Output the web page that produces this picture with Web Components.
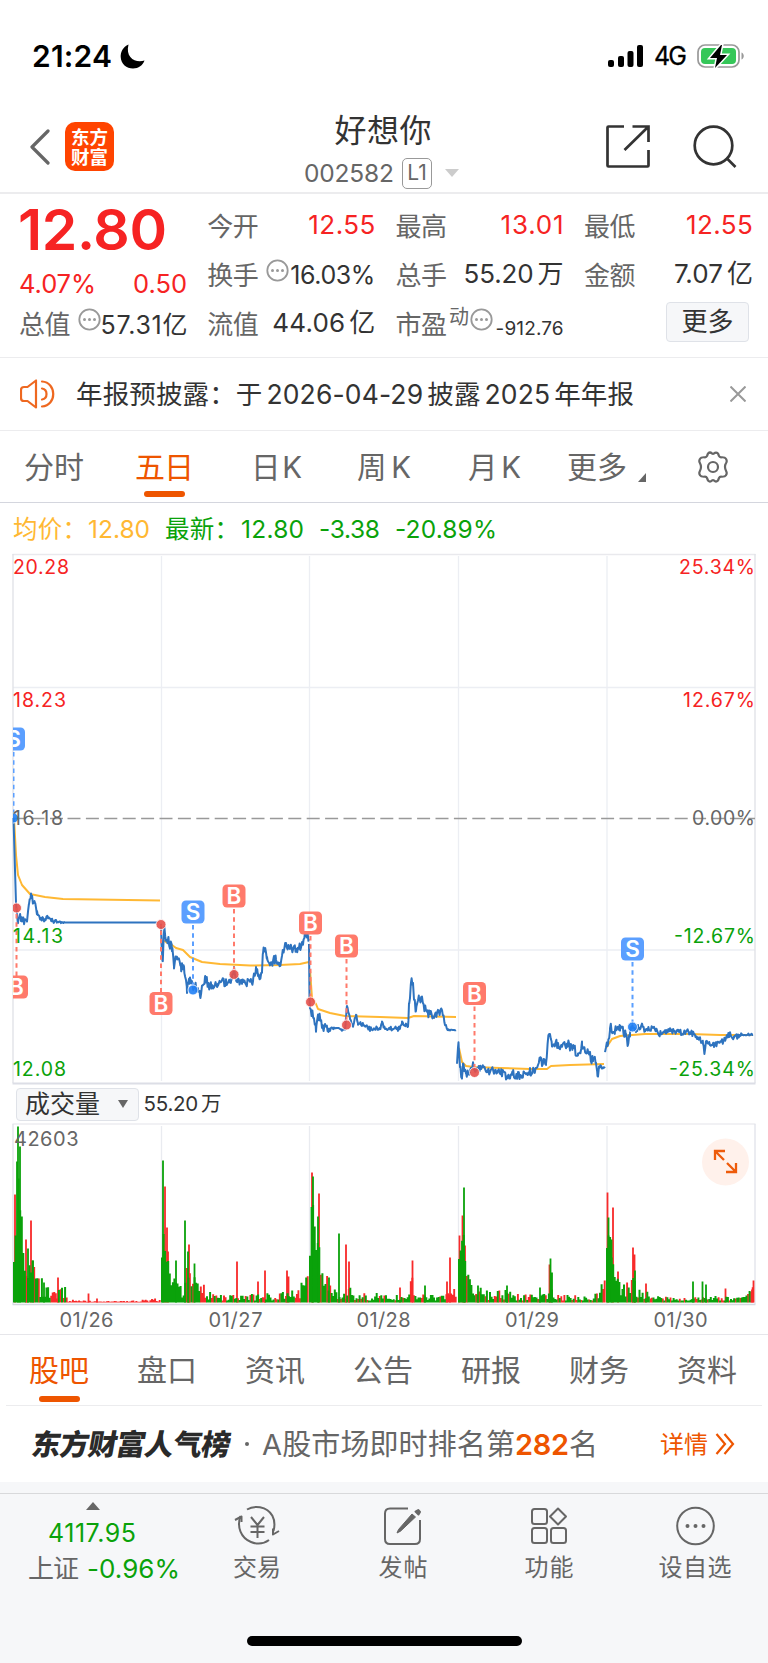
<!DOCTYPE html>
<html lang="zh-CN">
<head>
<meta charset="utf-8">
<title>好想你 002582</title>
<style>
  body {
    margin: 0;
    background: #fff;
    color: #333;
    font-family: Inter, "Noto Sans CJK SC", sans-serif;
    --grey: #666;
    --red: #f62323;
    --green: #0aa20a;
    --orange: #ee5500;
    --line: #ececee;
  }
</style>
</head>
<body>
<stock-page></stock-page>

<script>
  // Text that is tracked to fill an exact width
  class FitText extends HTMLElement {
    constructor() {
      super();
      this.attachShadow({ mode: 'open' });
      this.shadowRoot.innerHTML = `
        <style>
          :host { display: inline-block; white-space: nowrap; flex: none; }
        </style>
        <span><slot></slot></span>
      `;
    }

    connectedCallback() {
      const width = Number(this.getAttribute('w'));
      const size = this.getAttribute('s');
      if (size) this.style.fontSize = size + 'px';
      const span = this.shadowRoot.querySelector('span');
      const natural = span.getBoundingClientRect().width;
      const count = this.textContent.length;
      if (width && natural && count > 1) {
        this.style.letterSpacing = (width - natural) / (count - 1) + 'px';
      }
      this.style.width = width + 'px';
    }
  }
  customElements.define('fit-text', FitText);

  class StatusBar extends HTMLElement {
    constructor() {
      super();
      this.attachShadow({ mode: 'open' });
      this.shadowRoot.innerHTML = `
        <style>
          :host {
            display: flex; align-items: center; box-sizing: border-box;
            height: 96px; padding: 16px 22px 0 32px; color: #000;
          }
          .time { font-weight: 600; margin-right: 8px; }
          .gap { flex: 1; }
          .net { font-weight: 400; margin: 0 10px 0 10px; -webkit-text-stroke: .3px #000; }
        </style>
        <fit-text class="time" w="80" s="30">21:24</fit-text>
        <svg width="25" height="25" viewBox="0 0 25 25"><path d="M8.5 0.5C3 3 .5 8 .7 13 1 20 6.600 24.500 13 24.500c5.500 0 9.800-3.100 11.500-8C16 19.500 5 14 8.500.5z" fill="#000"/></svg>
        <span class="gap"></span>
        <svg width="36" height="23" viewBox="0 0 36 23">
          <rect x="0" y="15" width="6" height="7" rx="2"/><rect x="10" y="11" width="6" height="11" rx="2"/>
          <rect x="19.500" y="6" width="6" height="16" rx="2"/><rect x="29" y="0" width="6" height="22" rx="2"/>
        </svg>
        <fit-text class="net" w="33" s="25">4G</fit-text>
        <svg width="49" height="26" viewBox="0 0 49 26">
          <rect x="1" y="2" width="41" height="22" rx="7" fill="none" stroke="#999" stroke-width="1.700"/>
          <rect x="4" y="5" width="35" height="16" rx="4" fill="#35c759"/>
          <path d="M44.500 9.500c3 1.200 3 5.800 0 7z" fill="#999"/>
          <path d="M24 2L13 15h7l-2 10L30 12h-7l2-10z" fill="#000" stroke="#fff" stroke-width="3" paint-order="stroke"/>
        </svg>
      `;
    }
  }
  customElements.define('status-bar', StatusBar);

  class StockHeader extends HTMLElement {
    constructor() {
      super();
      this.attachShadow({ mode: 'open' });
      this.shadowRoot.innerHTML = `
        <style>
          :host {
            display: grid; grid-template-columns: 250px 1fr 250px; box-sizing: border-box;
            height: 98px; border-bottom: 2px solid var(--line);
          }
          .left { display: flex; align-items: center; padding: 5px 0 0 29px; gap: 14px; }
          .logo {
            display: flex; flex-direction: column; justify-content: center; align-items: center;
            width: 49px; height: 49px; border-radius: 10px; background: #ff4400;
            color: #fff; font-weight: 600; font-size: 18.500px; line-height: 20px;
          }
          .mid { display: flex; flex-direction: column; align-items: center; }
          .name { line-height: 42px; margin: 14px 2px 0 0; }
          .code { display: flex; align-items: center; height: 34px; margin-top: 4px; color: var(--grey); padding-right: 5px; }
          .level {
            box-sizing: border-box; width: 30px; height: 31px; line-height: 28px; margin: 0 13px 0 8px;
            border: 1.500px solid #999; border-radius: 5px; text-align: center; font-size: 21px;
          }
          .right { display: flex; align-items: center; justify-content: flex-end; gap: 43px; padding: 5px 31px 0 0; }
        </style>
        <div class="left">
          <svg width="22" height="36" viewBox="0 0 22 36"><path d="M19 2L3 18l16 16" fill="none" stroke="#666" stroke-width="3.200" stroke-linecap="round" stroke-linejoin="round"/></svg>
          <div class="logo"><span>东方</span><span>财富</span></div>
        </div>
        <div class="mid">
          <fit-text class="name" w="97" s="32">好想你</fit-text>
          <div class="code">
            <fit-text w="90" s="24.5">002582</fit-text><span class="level">L1</span>
            <svg width="14" height="8"><path d="M0 0h14L7 8z" fill="#ccc"/></svg>
          </div>
        </div>
        <div class="right">
          <svg width="44" height="43" viewBox="0 0 44 43" fill="none" stroke="#333" stroke-width="2.700">
            <path d="M18 1.500H2.500q-1 0-1 1V40.500q0 1 1 1H41.500q1 0 1-1V25"/>
            <path d="M26.500 1.500h16V17M42 2L18.500 25"/>
          </svg>
          <svg width="44" height="43" viewBox="0 0 44 43" fill="none" stroke="#333" stroke-width="2.700">
            <circle cx="20.500" cy="20.500" r="18.800"/><path d="M33.500 33l9 9"/>
          </svg>
        </div>
      `;
    }
  }
  customElements.define('stock-header', StockHeader);

  // Label on the left, value (slotted) on the right
  class QuoteCell extends HTMLElement {
    constructor() {
      super();
      this.attachShadow({ mode: 'open' });
      const sup = this.getAttribute('sup') || '';
      const info = this.hasAttribute('info')
        ? `<svg width="23" height="23" viewBox="0 0 23 23"><circle cx="11.500" cy="11.500" r="10.200" fill="none" stroke="#999" stroke-width="1.800"/><g fill="#999"><circle cx="6.500" cy="11.500" r="1.500"/><circle cx="11.500" cy="11.500" r="1.500"/><circle cx="16.500" cy="11.500" r="1.500"/></g></svg>`
        : '';
      this.shadowRoot.innerHTML = `
        <style>
          :host { display: flex; align-items: center; height: 49px; line-height: 49px; color: #333; }
          .label { color: var(--grey); }
          sup { font-size: 20px; line-height: 20px; color: var(--grey); margin: -15px 0 0 2px; }
          svg { margin: -11px 0 0 ${sup ? '1px' : '7px'}; flex: none; }
          .value { margin-left: auto; }
          :host([up]) .value { color: var(--red); }
        </style>
        <fit-text class="label" w="51.5" s="26">${this.getAttribute('label')}</fit-text>
        ${sup ? `<sup>${sup}</sup>` : ''}${info}
        <span class="value"><slot></slot></span>
      `;
    }
  }
  customElements.define('quote-cell', QuoteCell);

  class QuotePanel extends HTMLElement {
    constructor() {
      super();
      this.attachShadow({ mode: 'open' });
      this.shadowRoot.innerHTML = `
        <style>
          :host {
            display: grid; grid-template-columns: 168px 168px 168px 169px; column-gap: 20.300px;
            box-sizing: border-box; height: 164px; padding: 8px 0 0 19px;
            border-bottom: 1.500px solid var(--line);
          }
          .price { height: 56px; line-height: 56px; color: var(--red); font-weight: 600; }
          .price fit-text { margin-left: -1px; }
          .change { display: flex; justify-content: space-between; height: 52px; line-height: 51px; color: var(--red); }
          .total { height: 30px; line-height: 30px; }
          fit-text.low { position: relative; top: 1px; }
          fit-text.small { position: relative; top: 4.500px; }
          .u { margin-left: 4px; }
          button {
            display: block; margin: 2px 4px 0 auto; width: 83px; height: 40px; padding: 0;
            border: 1.500px solid #dfe2e8; border-radius: 4px; background: #f6f7f9;
            font: 26px/36px Inter, "Noto Sans CJK SC", sans-serif; color: #333;
          }
        </style>
        <div>
          <div class="price"><fit-text w="149" s="57">12.80</fit-text></div>
          <div class="change"><fit-text w="77" s="25.5">4.07%</fit-text><fit-text w="54" s="25.5">0.50</fit-text></div>
          <quote-cell class="total" label="总值" info><fit-text class="low" w="87" s="25">57.31亿</fit-text></quote-cell>
        </div>
        <div>
          <quote-cell label="今开" up><fit-text w="67" s="26">12.55</fit-text></quote-cell>
          <quote-cell label="换手" info><fit-text class="low" w="85" s="25">16.03%</fit-text></quote-cell>
          <quote-cell label="流值"><fit-text w="103" s="26">44.06<span class="u">亿</span></fit-text></quote-cell>
        </div>
        <div>
          <quote-cell label="最高" up><fit-text w="63" s="26">13.01</fit-text></quote-cell>
          <quote-cell label="总手"><fit-text w="100" s="26">55.20<span class="u">万</span></fit-text></quote-cell>
          <quote-cell label="市盈" sup="动" info><fit-text class="small" w="68" s="19">-912.76</fit-text></quote-cell>
        </div>
        <div>
          <quote-cell label="最低" up><fit-text w="67" s="26">12.55</fit-text></quote-cell>
          <quote-cell label="金额"><fit-text w="79" s="26">7.07<span class="u">亿</span></fit-text></quote-cell>
          <button>更多</button>
        </div>
      `;
    }
  }
  customElements.define('quote-panel', QuotePanel);

  class NoticeBar extends HTMLElement {
    constructor() {
      super();
      this.attachShadow({ mode: 'open' });
      this.shadowRoot.innerHTML = `
        <style>
          :host {
            display: flex; align-items: center; box-sizing: border-box; height: 73px;
            padding: 0 22px 0 20px; border-bottom: 1.500px solid var(--line);
          }
          fit-text { margin-left: 21px; line-height: 40px; }
          .n { margin: 0 4px; }
          .close { margin-left: auto; }
        </style>
        <svg width="35" height="30" viewBox="0 0 35 30" fill="none" stroke="#ee6820" stroke-width="2.200" stroke-linejoin="round" stroke-linecap="round">
          <path d="M16 1.500v27L7.500 22H4q-3 0-3-3v-8q0-3 3-3h3.500z"/>
          <path d="M22 2.500c15 1 15 24 0 25M22 9.500c6 1 6 10 0 11"/>
        </svg>
        <fit-text w="558" s="26.5">年报预披露：于<span class="n">2026-04-29</span>披露<span class="n">2025</span>年年报</fit-text>
        <svg class="close" width="16" height="16" viewBox="0 0 16 16"><path d="M.5.5l15 15M15.500.5l-15 15" stroke="#999" stroke-width="2"/></svg>
      `;
    }
  }
  customElements.define('notice-bar', NoticeBar);

  class PeriodTabs extends HTMLElement {
    constructor() {
      super();
      this.attachShadow({ mode: 'open' });
      this.shadowRoot.innerHTML = `
        <style>
          :host {
            display: flex; align-items: center; box-sizing: border-box; height: 72px;
            padding: 0 0 0 24px; border-bottom: 1.500px solid #d4d6de; color: var(--grey);
          }
          .tab { display: flex; flex-direction: column; align-items: center; height: 71px; line-height: 72px; }
          .tab.on { color: var(--orange); }
          .tab.on::after { content: ""; width: 41px; height: 6px; margin-top: -12px; border-radius: 3px; background: var(--orange); flex: none; }
          .tri { margin: 21px 0 0 11px; }
          .gear { margin-left: 50px; }
        </style>
        <div class="tab" style="margin-right:51px"><fit-text w="60" s="30">分时</fit-text></div>
        <div class="tab on" style="margin-right:57px"><fit-text w="59" s="30">五日</fit-text></div>
        <div class="tab" style="margin-right:55px"><fit-text w="51" s="29.5">日K</fit-text></div>
        <div class="tab" style="margin-right:57px"><fit-text w="54" s="29.5">周K</fit-text></div>
        <div class="tab" style="margin-right:46px"><fit-text w="53" s="29.5">月K</fit-text></div>
        <div class="tab"><fit-text w="60" s="30">更多</fit-text></div>
        <svg class="tri" width="8" height="9"><path d="M8 0v9H0z" fill="#666"/></svg>
        <svg class="gear" width="34" height="32" viewBox="0 0 34 32" fill="none" stroke="#666" stroke-width="2.200" stroke-linejoin="round">
          <path d="M12 2.500q2-2 4 0 1 .6 2 0 2-2 4 0l1 2.500q.6 1.200 2 1.300 4-.3 5 1.500 1.300 2 .2 4-1.300 2.200-1.200 4.200 0 2 1.200 4.200 1.100 2-.2 4-1 1.800-5 1.500-1.400.1-2 1.300l-1 2.500q-2 2-4 0-1-.6-2 0-2 2-4 0l-1-2.500q-.6-1.200-2-1.300-4 .3-5-1.500-1.300-2-.2-4Q5 18 5 16t-1.200-4.200q-1.100-2 .2-4 1-1.800 5-1.500 1.400-.1 2-1.300z"/>
          <circle cx="17" cy="16" r="5"/>
        </svg>
      `;
    }
  }
  customElements.define('period-tabs', PeriodTabs);

  // Small deterministic jitter, -1..1
  function jitter(n) {
    const v = Math.sin(n * 127.1 + 11.7) * 43758.5453;
    return (v - Math.floor(v)) * 2 - 1;
  }

  // Height of a polyline at x
  function valueAt(points, x) {
    for (let i = 1; i < points.length; i++) {
      const [x0, y0] = points[i - 1];
      const [x1, y1] = points[i];
      if (x <= x1) return y0 + (y1 - y0) * Math.max(0, x - x0) / (x1 - x0 || 1);
    }
    return points[points.length - 1][1];
  }

  const PRICES = [
    { noise: [[14, 0], [18, 3], [30, 5], [45, 3], [63, 0.6], [66, 0], [157, 0]], pts: [[13.5, 818], [15, 870], [16, 903], [18, 923], [20, 915], [22, 921], [27, 922], [29, 903], [31, 894], [33, 903], [35, 904], [37, 911], [41, 918], [45, 921], [48, 917], [53, 921], [62, 922.5], [157, 922.5]] },
    { noise: [[161, 6], [210, 5], [240, 3.5], [270, 5], [309, 4]], pts: [[161, 924], [161.5, 945], [162.500, 962], [164, 932], [168, 940], [172, 950], [174, 966], [177, 957], [181, 966], [184, 966], [187, 992], [189, 978], [193, 989], [198, 987], [200, 995], [205, 977], [210, 987], [218, 983], [228, 982], [232, 980], [234, 968], [236, 980], [244, 983], [253, 981], [256, 968], [259, 978], [262, 973], [263, 953], [265, 948], [267, 958], [271, 963], [276, 959], [280, 963], [284, 951], [286, 943], [290, 949], [297, 949], [303, 944], [305, 931], [307.5, 935], [309, 938]] },
    { noise: [[310, 6], [325, 4], [335, 1.5], [400, 2.5], [412, 5], [440, 4], [450, 0.4]], pts: [[309, 945], [309.5, 1000], [311, 1012], [314, 1018], [316, 1032], [318, 1014], [321, 1020], [323, 1029], [325, 1024], [328, 1030], [334, 1029], [345, 1030], [347, 1006], [350, 1018], [353, 1027], [356, 1015], [358, 1023], [364, 1025], [370, 1029], [380, 1028], [382, 1023], [385, 1029], [400, 1029], [402, 1024], [408, 1026], [409, 1004], [411, 983], [413, 982], [414, 1000], [416, 1010], [419, 999], [422, 1000], [425, 1009], [430, 1015], [436, 1014], [442, 1010], [445, 1025], [448, 1030], [456, 1030]] },
    { noise: [[458, 4], [475, 3], [540, 5], [595, 5], [605, 0.7]], pts: [[457, 1064], [458.5, 1042], [460, 1068], [462, 1079], [463, 1063], [466, 1074], [470, 1073], [473, 1062], [475, 1072], [482, 1066], [488, 1072], [495, 1070], [501, 1072], [507, 1078], [513, 1074], [520, 1076], [526, 1073], [534, 1070], [540, 1061], [546, 1063], [549, 1034], [552, 1046], [556, 1042], [560, 1050], [564, 1043], [570, 1046], [578, 1053], [582, 1046], [588, 1052], [593, 1061], [596, 1062], [597.5, 1077], [599, 1066], [605, 1068]] },
    { noise: [[606, 5], [640, 5], [650, 3], [710, 3], [735, 3], [742, 1.2]], pts: [[605, 1051], [608, 1044], [610, 1028], [615, 1030], [620, 1030], [626, 1033], [628, 1044], [630, 1032], [632, 1026], [636, 1031], [638, 1028], [653, 1028], [660, 1034], [670, 1031], [680, 1032], [690, 1032], [700, 1038], [703, 1044], [704.5, 1054], [706, 1042], [716, 1045], [724, 1040], [729, 1034], [734, 1038], [742, 1034], [753, 1035]] }
  ];

  const AVERAGES = [
    'M14 818L16 855 18 875 22 885 30 894 45 897 63 899 160 900.500',
    'M163 940L166 942 172 945 176 948 183 950 190 957 202 962 220 964 250 965.500 280 965 300 964 309 962',
    'M310 970L312 998 316 1004 318 1009 330 1013 345 1016 380 1017 408 1018 414 1016 456 1017',
    'M459 1048L462 1062 466 1066 474 1067 500 1068 530 1069 547 1069 551 1066 570 1065 604 1064',
    'M606 1048L612 1039 620 1036 645 1034 690 1034 720 1035 753 1035'
  ];

  // kind, badge centre, dot centre
  const TRADES = [
    ['S', 13.5, 739, 818], ['B', 16.5, 987, 908], ['B', 161, 1003.5, 924.500],
    ['S', 193, 912, 990], ['B', 234, 896, 974.500], ['B', 310.5, 923, 1002],
    ['B', 346.5, 946, 1025], ['B', 474.5, 993.500, 1072.500], ['S', 632.5, 949, 1027]
  ];

  class PriceChart extends HTMLElement {
    constructor() {
      super();
      this.attachShadow({ mode: 'open' });
      const lines = PRICES.map((day, d) => {
        const first = day.pts[0][0];
        const last = day.pts[day.pts.length - 1][0];
        const all = day.pts.map(p => [...p, 0.25]);
        for (let x = first + 1; x < last; x += 0.8) all.push([x, valueAt(day.pts, x), 1]);
        all.sort((a, b) => a[0] - b[0]);
        return 'M' + all.map(([x, y, k]) =>
          x.toFixed(1) + ' ' + Math.min(1081, y + jitter(x + d) * valueAt(day.noise, x) * k).toFixed(1)).join('L');
      });
      const trades = TRADES.map(([kind, x, y, dot]) => {
        const buy = kind === 'B';
        const tint = buy ? '#ff7a6b' : '#5b9fff';
        return `
          <line x1="${x}" x2="${x}" y1="${y > dot ? y - 11 : y + 13}" y2="${dot}" stroke="${tint}" stroke-width="2" stroke-dasharray="4.500 3.700"/>
          <circle cx="${x}" cy="${dot}" r="5" fill="${buy ? '#e6504a' : '#2080f5'}" fill-opacity=".9" stroke="#fff" stroke-width=".8"/>
          <rect x="${x - 11.5}" y="${y - 11.5}" width="23" height="23" rx="4.500" fill="${tint}"/>
          <text x="${x}" y="${y + 8}" class="mark">${kind}</text>`;
      }).join('');
      this.shadowRoot.innerHTML = `
        <style>
          :host { display: block; height: 532px; }
          svg { display: block; }
          text { font: 19.500px Inter, sans-serif; }
          .mark { font-size: 22.500px; font-weight: 600; fill: #fff; text-anchor: middle; }
          .r { fill: #f62323; } .g { fill: #0aa20a; } .k { fill: #666; }
          .e { text-anchor: end; }
        </style>
        <svg width="768" height="532" viewBox="0 553 768 532">
          <defs><clipPath id="plot"><rect x="13" y="554" width="743" height="530"/></clipPath></defs>
          <path d="M161.500 556v525M309.500 556v525M458.500 556v525M607 556v525M13 687.500h742M13 950h742" stroke="#eceef3" stroke-width="1.300"/>
          <path d="M12.500 554.500h743" stroke="#e9e9ed" stroke-width="1.500"/>
          <path d="M13 554v529M755 554v529" stroke="#dfe0e6" stroke-width="1.300"/><path d="M12.500 1083.500h743" stroke="#dcdee6" stroke-width="1.800"/>
          <path d="M13 818.500h50" stroke="#999" stroke-width="1.500" stroke-dasharray="13 5.500"/>
          <path d="M67.500 818.500H755" stroke="#999" stroke-width="1.500" stroke-dasharray="13 5.400"/>
          <g fill="none" stroke="#ffb833" stroke-width="2" stroke-linejoin="round">${AVERAGES.map(d => `<path d="${d}"/>`).join('')}</g>
          <g fill="none" stroke="#2e73bf" stroke-width="2" stroke-linejoin="round">${lines.map(d => `<path d="${d}"/>`).join('')}</g>
          <g clip-path="url(#plot)">${trades}</g>
          <text x="13" y="574" textLength="56" class="r">20.28</text>
          <text x="13" y="706.500" textLength="53" class="r">18.23</text>
          <text x="13" y="825" textLength="50" class="k">16.18</text>
          <text x="13" y="943" textLength="50" class="g">14.13</text>
          <text x="13" y="1075.500" textLength="53" class="g">12.08</text>
          <text x="755" y="574" textLength="76" class="r e">25.34%</text>
          <text x="755" y="706.500" textLength="72" class="r e">12.67%</text>
          <text x="755" y="825" textLength="63" class="k e">0.00%</text>
          <text x="755" y="943" textLength="81" class="g e">-12.67%</text>
          <text x="755" y="1075.500" textLength="86" class="g e">-25.34%</text>
        </svg>
      `;
    }
  }
  customElements.define('price-chart', PriceChart);

  const VOLUME_BASE = [
    [[14, 36], [16, 90], [17, 125], [18, 160], [20, 117], [22, 98], [24, 45], [27, 28], [30, 36], [33, 42], [36, 24], [40, 17], [50, 11], [65, 13], [67, 2.5], [80, 1.500], [130, 1], [160, 3]],
    [[162, 41], [163, 100], [165, 55], [168, 38], [171, 22], [175, 19], [180, 13], [184, 10], [187, 38], [190, 18], [197, 16], [204, 12], [210, 7], [225, 5], [280, 6], [300, 10], [308, 28]],
    [[310, 45], [311, 98], [313, 126], [315, 66], [317, 60], [319, 70], [321, 33], [324, 20], [330, 16], [338, 10], [344, 6], [348, 16], [352, 7], [380, 6], [408, 6], [412, 28], [416, 7], [440, 5], [457, 10]],
    [[459, 40], [461, 50], [464, 72], [466, 28], [472, 20], [480, 10], [490, 7], [505, 8], [520, 5], [548, 6], [551, 20], [554, 8], [562, 5], [590, 4], [600, 12], [606, 24]],
    [[607, 50], [609, 80], [611, 48], [613, 45], [616, 22], [622, 14], [630, 16], [633, 30], [636, 10], [645, 8], [655, 5], [680, 3], [700, 5], [725, 4], [748, 6], [754, 12]]
  ];
  const SPIKES = {
    r: [[15, 108], [26, 63], [31, 82], [58, 25], [88.5, 9], [97, 4], [165, 116], [167, 75], [168, 51], [189, 58], [237, 41], [258, 21], [265, 32], [287, 32], [288.5, 26], [312, 130], [319, 109], [346, 58], [349, 41], [400, 15], [412.5, 42], [447, 21], [450, 45], [459.5, 67], [462.5, 87], [465, 57], [549.5, 38], [607.5, 110], [613, 95], [618, 31], [633, 55], [634.5, 48], [646, 19], [725.5, 14], [752, 13], [753.5, 22]],
    g: [[18, 176], [20, 156], [28, 54], [33, 42], [44, 20], [163, 142], [176, 42], [185, 82], [188, 51], [194.5, 39], [313, 126], [318, 86], [329, 25], [339, 69], [425, 17], [464, 115], [478, 17], [507, 17], [540, 15], [550.5, 44], [552, 30], [608.5, 85], [611.5, 63], [635, 32], [693, 21], [702.5, 21], [706, 18]]
  };

  class VolumeChart extends HTMLElement {
    constructor() {
      super();
      this.attachShadow({ mode: 'open' });
      const path = { r: '', g: '' };
      const floor = 1302.5;
      VOLUME_BASE.forEach((day, d) => {
        const last = day[day.length - 1][0];
        for (let x = day[0][0]; x <= last; x += 1.55) {
          const h = valueAt(day, x);
          const quiet = d === 0 && x > 67;
          const red = quiet || (h < 40 && jitter(x * 3 + d) > 0.3);
          const bar = Math.max(quiet ? 0.8 : 2, h * (0.95 + jitter(x + d * 5) * (h < 20 ? 0.65 : 0.18)));
          path[red ? 'r' : 'g'] += `M${x.toFixed(1)} ${floor}v-${bar.toFixed(1)}`;
        }
      });
      const spikes = k => SPIKES[k].map(([x, h]) => `M${x} ${floor}v-${h}`).join('');
      const dates = ['01/26', '01/27', '01/28', '01/29', '01/30'];
      const centers = [86.5, 235.5, 383.5, 532, 680.5];
      this.shadowRoot.innerHTML = `
        <style>
          :host { display: block; height: 211px; border-bottom: 1.500px solid #e6e6ea; }
          svg { display: block; }
          text { font: 20px Inter, sans-serif; fill: #666; }
          .date { text-anchor: middle; }
        </style>
        <svg width="768" height="211" viewBox="0 1123 768 211">
          <path d="M161.500 1126v178M309.500 1126v178M458.500 1126v178M607 1126v178" stroke="#e9ebf0" stroke-width="1.300"/>
          <path d="M12.500 1124h743" stroke="#ececf0" stroke-width="1.500"/>
          <path d="M13 1124v180M755 1124v180" stroke="#e0e2ea" stroke-width="1.300"/><path d="M12.500 1304.500h743" stroke="#d4d8e0" stroke-width="1.300"/>
          <path d="${spikes('r')}" stroke="#f82a2a" stroke-width="1.800"/>
          <path d="${path.r}" stroke="#f82a2a" stroke-width="1.900"/>
          <path d="${path.g}" stroke="#0aa20a" stroke-width="2"/>
          <path d="${spikes('g')}" stroke="#0aa20a" stroke-width="1.800"/>
          <text x="14" y="1146" textLength="64.500">42603</text>
          <circle cx="725.500" cy="1162" r="23.500" fill="#fff1eb"/>
          <path d="M715 1160v-9h10M716 1152l8 8M736 1163v9h-10M735 1171l-8-8" fill="none" stroke="#ee5b0a" stroke-width="2.300"/>
          ${dates.map((t, i) => `<text class="date" x="${centers[i]}" y="1327" textLength="54">${t}</text>`).join('')}
        </svg>
      `;
    }
  }
  customElements.define('volume-chart', VolumeChart);

  class ChartPanel extends HTMLElement {
    constructor() {
      super();
      this.attachShadow({ mode: 'open' });
      this.shadowRoot.innerHTML = `
        <style>
          :host { display: block; }
          .legend { display: flex; height: 50px; padding-left: 13px; line-height: 52px; color: var(--green); }
          .avg { color: #ffb833; }
          .bar { display: flex; align-items: center; height: 38px; padding-left: 16px; font-size: 25px; line-height: 30px; }
          .pick {
            display: flex; align-items: center; justify-content: space-between; box-sizing: border-box;
            width: 122.500px; height: 33px; padding: 0 10px 0 8px; margin-right: 5px;
            border: 1.500px solid #dfe2e8; border-radius: 4px; background: #f6f7f9;
          }
          .u { margin-left: 3px; }
        </style>
        <div class="legend">
          <fit-text class="avg" style="margin-right:1px" w="74" s="24.5">均价：</fit-text>
          <fit-text class="avg" style="margin-right:15px" w="62" s="24.5">12.80</fit-text>
          <fit-text style="margin-right:2px" w="74" s="24.5">最新：</fit-text>
          <fit-text style="margin-right:15px" w="63" s="24.5">12.80</fit-text>
          <fit-text style="margin-right:15px" w="61" s="24.5">-3.38</fit-text>
          <fit-text w="102" s="24.5">-20.89%</fit-text>
        </div>
        <price-chart></price-chart>
        <div class="bar">
          <div class="pick"><fit-text w="75" s="25">成交量</fit-text><svg width="10" height="8"><path d="M0 0h10L5 8z" fill="#666"/></svg></div>
          <fit-text w="78" s="20.5">55.20<span class="u">万</span></fit-text>
        </div>
        <volume-chart></volume-chart>
      `;
    }
  }
  customElements.define('chart-panel', ChartPanel);

  class SectionTabs extends HTMLElement {
    constructor() {
      super();
      this.attachShadow({ mode: 'open' });
      const tabs = ['股吧', '盘口', '资讯', '公告', '研报', '财务', '资料'];
      this.shadowRoot.innerHTML = `
        <style>
          :host {
            display: flex; justify-content: space-between; box-sizing: border-box; height: 71px;
            margin: 0 6px; padding: 0 25px 0 23px; border-bottom: 1.500px solid var(--line); color: var(--grey);
          }
          .tab { display: flex; flex-direction: column; align-items: center; line-height: 71px; height: 70px; }
          .on { color: var(--orange); }
          .on::after { content: ""; width: 41px; height: 6px; margin: -10px 0 0 1px; border-radius: 3px; background: var(--orange); }
        </style>
        ${tabs.map((t, i) => `<div class="tab${i ? '' : ' on'}"><fit-text w="60" s="30">${t}</fit-text></div>`).join('')}
      `;
    }
  }
  customElements.define('section-tabs', SectionTabs);

  class RankRow extends HTMLElement {
    constructor() {
      super();
      this.attachShadow({ mode: 'open' });
      this.shadowRoot.innerHTML = `
        <style>
          :host {
            display: flex; align-items: center; box-sizing: border-box; height: 76px; padding: 0 33px 0 32px;
            color: var(--grey); line-height: 77px;
          }
          .title { font-weight: 900; color: #2a2a2a; transform: skewX(-10deg); margin-right: 8px; }
          .dot { width: 4px; height: 4px; border-radius: 50%; background: #666; margin-right: 13px; }
          .num { color: var(--orange); font-weight: 600; }
          .more { color: var(--orange); margin-left: auto; margin-right: 7px; }
        </style>
        <fit-text class="title" w="205" s="29">东方财富人气榜</fit-text>
        <span class="dot"></span>
        <fit-text w="253" s="29">A股市场即时排名第</fit-text>
        <fit-text class="num" w="54" s="29">282</fit-text>
        <fit-text w="29" s="29">名</fit-text>
        <fit-text class="more" w="48" s="24">详情</fit-text>
        <svg width="20" height="22" viewBox="0 0 20 22" fill="none" stroke="#ee5500" stroke-width="2.200"><path d="M1.500 1l8.500 10-8.500 10M9.500 1L18 11 9.500 21"/></svg>
      `;
    }
  }
  customElements.define('rank-row', RankRow);

  class BottomBar extends HTMLElement {
    constructor() {
      super();
      this.attachShadow({ mode: 'open' });
      const icons = [
        ['交易', 48, `<path d="M14 4.500Q19.500 1 27 2.200C39 4.500 43.500 15 40.500 26M36 35Q28 41 18 37C8 33 3.500 22 7.500 11"/><path d="M2 15l6.500-3.500V17M46 26l-6 3.500v-6"/><path d="M18 12l6.500 8 6.500-8M24.500 20v13M17.500 21.500h14M17.500 27h14"/>`],
        ['发帖', 49, `<path d="M29 3.500H11q-5 0-5 5V34q0 5 5 5H36q5 0 5-5V15"/><path d="M33 9L19.500 24.500 18 28l3.500-1.800L36.500 12z" fill="#666" stroke-width="1"/><path d="M36.500 6.500l3 3 1.500-2.500-1.800-2z" fill="#666"/>`],
        ['功能', 49, `<rect x="7" y="4" width="15" height="15" rx="2.500"/><path d="M33 3.500l8 8-8 8-8-8z"/><rect x="7" y="23" width="15" height="15" rx="2.500"/><rect x="26" y="23" width="15" height="15" rx="2.500"/>`],
        ['设自选', 73, `<circle cx="24.500" cy="21" r="18.300"/><g fill="#666" stroke="none"><circle cx="16.500" cy="21" r="2"/><circle cx="24.500" cy="21" r="2"/><circle cx="32.500" cy="21" r="2"/></g>`]
      ];
      this.shadowRoot.innerHTML = `
        <style>
          :host { display: block; box-sizing: border-box; height: 181px; padding-top: 11px; background: #f6f7f9; color: var(--grey); }
          .row { display: flex; height: 143px; border-top: 1.500px solid #d8d9db; box-sizing: border-box; }
          .index { display: flex; flex-direction: column; align-items: center; width: 184px; color: var(--green); }
          .index svg { margin: 8px 0 0 1px; }
          .value { line-height: 36px; margin-top: 5px; }
          .pct { display: flex; gap: 8px; line-height: 36px; padding-left: 24px; }
          .pct .name { color: var(--grey); }
          .item { display: flex; flex-direction: column; align-items: center; width: 146px; padding-top: 11px; line-height: 40px; }
          .item fit-text { margin-top: 1px; }
          .home { width: 275px; height: 10px; border-radius: 5px; background: #000; margin-left: 247px; }
        </style>
        <div class="row">
          <div class="index">
            <svg width="14" height="8"><path d="M7 0l7 8H0z" fill="#666"/></svg>
            <fit-text class="value" w="88" s="25">4117.95</fit-text>
            <div class="pct"><fit-text class="name" w="51" s="26">上证</fit-text><fit-text w="93" s="26">-0.96%</fit-text></div>
          </div>
          ${icons.map(([name, w, art]) => `<div class="item">
            <svg width="49" height="42" viewBox="0 0 49 42" fill="none" stroke="#666" stroke-width="2" stroke-linejoin="round">${art}</svg>
            <fit-text w="${w}" s="24">${name}</fit-text></div>`).join('')}
        </div>
        <div class="home"></div>
      `;
    }
  }
  customElements.define('bottom-bar', BottomBar);

  class StockPage extends HTMLElement {
    constructor() {
      super();
      this.attachShadow({ mode: 'open' });
      this.shadowRoot.innerHTML = `
        <style>
          :host { display: block; width: 768px; height: 1663px; overflow: hidden; }
        </style>
        <status-bar></status-bar>
        <stock-header></stock-header>
        <quote-panel></quote-panel>
        <notice-bar></notice-bar>
        <period-tabs></period-tabs>
        <chart-panel></chart-panel>
        <section-tabs></section-tabs>
        <rank-row></rank-row>
        <bottom-bar></bottom-bar>
      `;
    }
  }
  customElements.define('stock-page', StockPage);
</script>
</body>
</html>
